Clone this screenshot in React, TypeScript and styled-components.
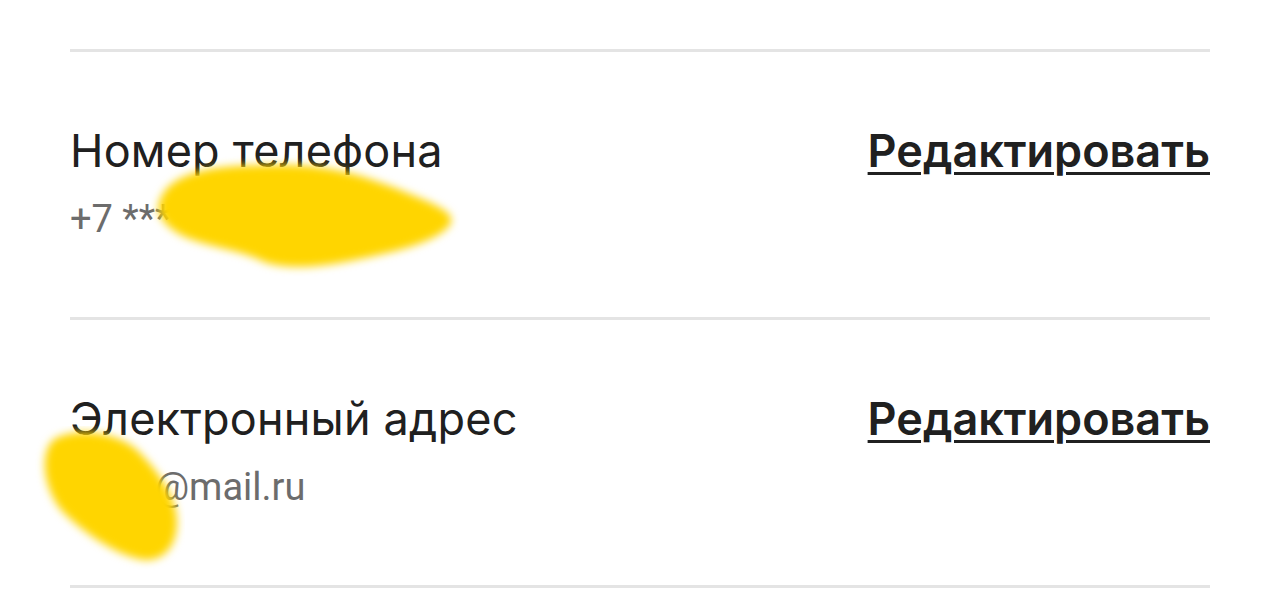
import React from "react";
import styled, { createGlobalStyle } from "styled-components";

const GlobalStyle = createGlobalStyle`
  body {
    margin: 0;
    background: #ffffff;
  }
`;

const Page = styled.div`
  padding: 49px 70px 0;
`;

const List = styled.div`
  border-bottom: 3px solid #e4e4e4;
`;

const Row = styled.div`
  position: relative;
  display: flex;
  justify-content: space-between;
  align-items: flex-start;
  border-top: 3px solid #e4e4e4;
  padding: 72px 0 75px;
`;

const Info = styled.div`
  display: flex;
  flex-direction: column;
  gap: 18px;
`;

const Label = styled.div`
  font-family: Inter, "Noto Sans", sans-serif;
  font-size: 45px;
  line-height: 54px;
  letter-spacing: 0.2px;
  color: #202020;
`;

const Value = styled.div<{ $indent: number }>`
  font-family: Roboto, "Liberation Sans", sans-serif;
  font-size: 38px;
  line-height: 46px;
  color: #6c6c6c;
  padding-left: ${(p) => p.$indent}px;
`;

const EditLink = styled.a`
  font-family: Inter, "Noto Sans", sans-serif;
  font-size: 45px;
  line-height: 54px;
  font-weight: 600;
  color: #202020;
  text-decoration: underline;
  text-decoration-thickness: 3px;
  text-underline-offset: 5px;
  cursor: pointer;
`;

const Smudge = styled.svg<{ $left: number; $top: number }>`
  position: absolute;
  left: ${(p) => p.$left}px;
  top: ${(p) => p.$top}px;
  pointer-events: none;
`;

type Field = {
  label: string;
  value: string;
  indent: number;
  smudge: { left: number; top: number; w: number; h: number; d: string };
};

const fields: Field[] = [
  {
    label: "Номер телефона",
    value: "+7 ***",
    indent: 0,
    smudge: {
      left: 80,
      top: 103,
      w: 310,
      h: 125,
      d: "M 10 45 C 20 18, 60 10, 120 10 C 190 8, 232 28, 272 44 C 298 55, 306 62, 299 71 C 285 88, 240 98, 200 106 C 160 114, 125 114, 108 104 C 88 95, 60 92, 35 82 C 14 72, 4 58, 10 45 Z",
    },
  },
  {
    label: "Электронный адрес",
    value: "@mail.ru",
    indent: 85,
    smudge: {
      left: -35,
      top: 106,
      w: 150,
      h: 148,
      d: "M 18 14 C 40 0, 82 6, 102 24 C 122 44, 142 70, 142 96 C 142 122, 126 138, 104 133 C 78 127, 48 106, 28 86 C 10 66, 3 30, 18 14 Z",
    },
  },
];

const App: React.FC = () => {
  return (
    <>
      <GlobalStyle />
      <Page>
        <List>
          {fields.map((f, i) => (
            <Row key={f.label}>
              <Info>
                <Label>{f.label}</Label>
                <Value $indent={f.indent}>{f.value}</Value>
              </Info>
              <EditLink>Редактировать</EditLink>
              <Smudge
                $left={f.smudge.left}
                $top={f.smudge.top}
                width={f.smudge.w}
                height={f.smudge.h}
                viewBox={`0 0 ${f.smudge.w} ${f.smudge.h}`}
              >
                <defs>
                  <filter id={`soft${i}`} x="-20%" y="-20%" width="140%" height="140%">
                    <feGaussianBlur stdDeviation="4" />
                  </filter>
                </defs>
                <path d={f.smudge.d} fill="#ffd500" filter={`url(#soft${i})`} />
              </Smudge>
            </Row>
          ))}
        </List>
      </Page>
    </>
  );
};

export default App;
